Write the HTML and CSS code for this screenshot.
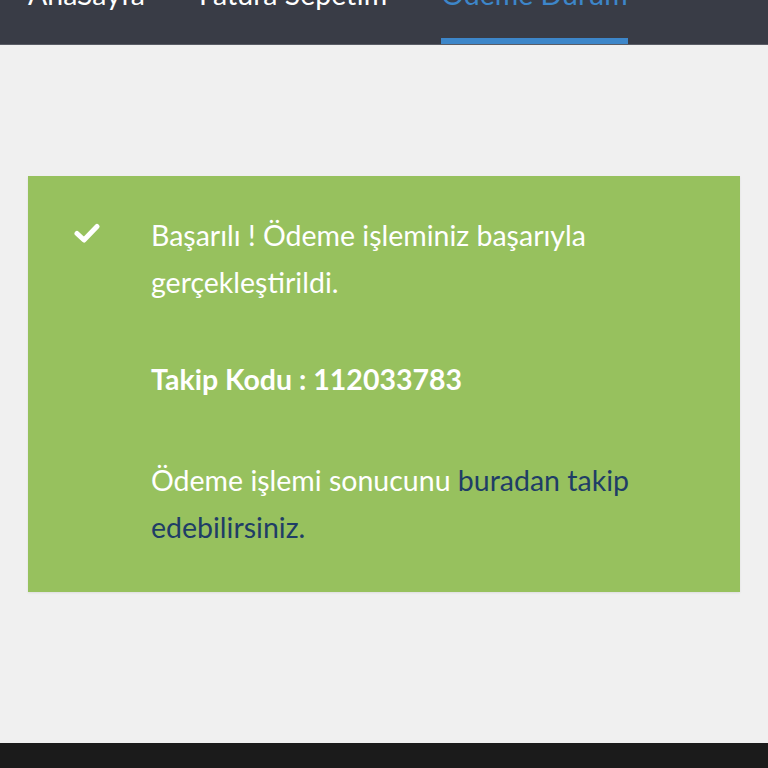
FILE: index.html
```html
<!DOCTYPE html>
<html lang="tr">
<head>
  <meta charset="UTF-8">
  <title>Ödeme Durum</title>
  <meta name="viewport" content="width=device-width, initial-scale=1.0">
  <link rel="stylesheet" href="styles.css">
</head>
<body>

  <header class="topbar">
    <ul class="crumbs">
      <li><a href="#">AnaSayfa</a></li>
      <li class="sep">›</li>
      <li><a href="#">Fatura Sepetim</a></li>
      <li class="sep">›</li>
      <li class="active"><a href="#">Ödeme Durum</a></li>
    </ul>
  </header>

  <main class="content">
    <div class="alert-success">
      <div class="alert-icon">
        <svg width="26" height="20" viewBox="0 0 26 20">
          <path d="M3 10.5 L10 17 L23 3.5" fill="none" stroke="#fff" stroke-width="5" stroke-linecap="round" stroke-linejoin="round"/>
        </svg>
      </div>
      <div class="alert-body">
        <p>Başarılı ! Ödeme işleminiz başarıyla gerçekleştirildi.</p>
        <p class="code"><strong>Takip Kodu : 112033783</strong></p>
        <p>Ödeme işlemi sonucunu <a href="#">buradan takip edebilirsiniz.</a></p>
      </div>
    </div>
  </main>

  <footer class="bottombar"></footer>

</body>
</html>
```

FILE: styles.css
```css
body {
  margin: 0;
  font-family: Lato, "Open Sans", sans-serif;
  background-color: #f0f0f0;
}
.topbar {
  height: 44px;
  background-color: #393c46;
  border-bottom: 1px solid #5a5d66;
  overflow: hidden;
}
.crumbs {
  list-style: none;
  margin: -23px 0 0 0;
  padding: 0 0 0 28px;
  display: flex;
  align-items: flex-start;
  font-size: 28.5px;
  line-height: 34px;
}
.crumbs li a {
  color: #ffffff;
  text-decoration: none;
}
.crumbs .sep {
  color: #ffffff;
  font-size: 18px;
  padding: 0 25px 0 24px;
}
.crumbs .active {
  border-bottom: 7px solid #3d86c9;
  padding-bottom: 27px;
}
.crumbs .active a {
  color: #3d86c9;
}
.content {
  height: 698px;
  padding: 131px 28px 0 28px;
  box-sizing: border-box;
}
.alert-success {
  display: flex;
  background-color: #97c15e;
  height: 416px;
  box-sizing: border-box;
  padding: 36px 40px 0 46px;
  color: #ffffff;
  box-shadow: 0 1px 2px rgba(0,0,0,0.08);
}
.alert-icon {
  width: 77px;
  padding-top: 11px;
}
.alert-body {
  flex: 1;
  font-size: 28.5px;
  line-height: 47px;
}
.alert-body p {
  margin: 0 0 50px 0;
}
.alert-body .code {
  margin-bottom: 54px;
}
.alert-body a {
  color: #1f3d66;
  text-decoration: none;
}
.bottombar {
  height: 30px;
  background-color: #1b1b1b;
}
```
